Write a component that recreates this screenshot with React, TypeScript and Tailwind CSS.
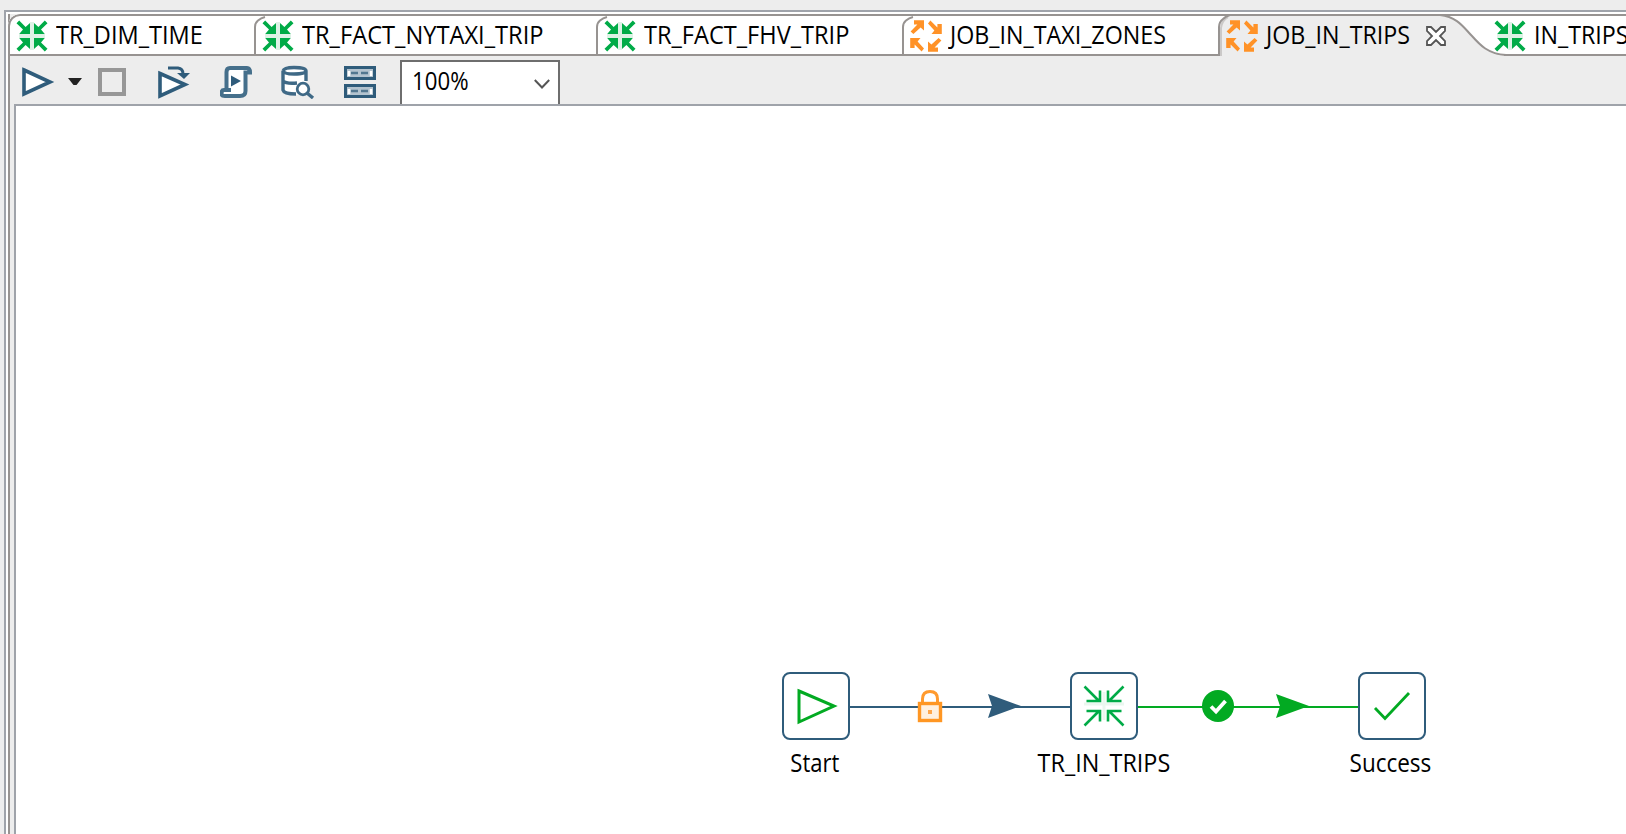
import type { ReactNode } from "react";

const TEXT = "font-['Open_Sans','Noto_Sans',sans-serif] text-[25px] leading-[34px] whitespace-pre text-black";

function TransformationIcon() {
  const arrow = "M0.5 3.2 L3.2 0.5 L9.6 7 L14 3 V14 H3.2 L7 9.6 Z";
  return (
    <svg width="32" height="32" viewBox="0 0 32 32" fill="#00ab47" className="shrink-0">
      <path d="M14 2h4v28h-4zM3 14h26v4H3z" fill="#def2e6" />
      <path d={arrow} />
      <path d={arrow} transform="translate(32 0) scale(-1 1)" />
      <path d={arrow} transform="translate(0 32) scale(1 -1)" />
      <path d={arrow} transform="translate(32 32) scale(-1 -1)" />
    </svg>
  );
}

function JobIcon() {
  const arrow = "M4 0.2 H14 V10.5 L10.6 7.6 L3.4 14 L0.6 11.6 L7.4 4.6 H4 Z";
  return (
    <svg width="32" height="32" viewBox="0 0 32 32" fill="#ff9227" className="shrink-0">
      <path d={arrow} />
      <path d={arrow} transform="rotate(90 16 16)" />
      <path d={arrow} transform="rotate(180 16 16)" />
      <path d={arrow} transform="rotate(270 16 16)" />
    </svg>
  );
}

function TabEdge() {
  return (
    <svg width="12" height="40" viewBox="0 0 12 40" className="absolute left-0 top-0" fill="none" stroke="#979391" strokeWidth="2">
      <path d="M1 39 V11 Q1 7 4 4.500 Q7 2 11 1" />
    </svg>
  );
}

function Tab({ label, icon, box, fit, edge = true }: { label: string; icon: ReactNode; box: string; fit: string; edge?: boolean }) {
  return (
    <div className={`relative flex h-[40px] shrink-0 items-start overflow-hidden border-b-2 border-[#979391] pt-[4px] ${box}`}>
      {edge && <TabEdge />}
      {icon}
      <span className={`ml-2 mt-[-3px] origin-left ${TEXT} ${fit}`}>{label}</span>
    </div>
  );
}

function ActiveTab() {
  return (
    <div className="relative flex h-[40px] w-[268px] shrink-0 items-start pl-2 pt-[4px]">
      <svg width="290" height="42" viewBox="0 0 290 42" className="absolute left-0 top-[-2px] z-10" fill="none">
        <path d="M1 42 V14 Q2 4 12 1 H222 C240 3 246 14 254 22 C262 31 270 41 286 41 V42 Z" fill="#ededed" />
        <path d="M3 42 V14 Q4 6 10 3" stroke="#cbc9c8" strokeWidth="2" />
        <path d="M0 41 H1 V13 Q1 8 5 5 Q8 2 12 1 H222 C240 3 246 14 254 22 C262 31 270 40 288 41" stroke="#979391" strokeWidth="2" />
      </svg>
      <div className="relative z-20 flex items-start">
        <JobIcon />
        <span className={`ml-2 mt-[-3px] w-[152px] origin-left scale-x-[0.93] ${TEXT}`}>JOB_IN_TRIPS</span>
        <svg width="22" height="22" viewBox="0 0 22 22" className="absolute left-[199px] top-[5px]">
          <path d="M2 2 H6 L11 7 L16 2 H20 V6 L15 11 L20 16 V20 H16 L11 15 L6 20 H2 V16 L7 11 L2 6 Z" fill="#fff" stroke="#555" strokeWidth="1.8" />
        </svg>
      </div>
    </div>
  );
}

function Toolbar() {
  return (
    <div className="flex h-[48px] items-start pl-3">
      <svg width="34" height="34" viewBox="0 0 34 34" className="mt-[9px]">
        <path d="M2 5 L28 17 L2 29 Z" fill="#fff" stroke="#2f5c7b" strokeWidth="3.6" />
      </svg>
      <svg width="14" height="8" viewBox="0 0 14 8" className="ml-3 mt-[22px]">
        <path d="M0 0 H14 L8.500 7 H5.500 Z" fill="#222" />
      </svg>
      <div className="ml-4 mt-3 h-7 w-7 border-4 border-[#979797]" />
      <svg width="34" height="34" viewBox="0 0 34 34" className="ml-8 mt-[9px]">
        <path d="M2 8.500 L27 19.500 L2 31 Z" fill="#fff" stroke="#2f5c7b" strokeWidth="3.600" />
        <path d="M10 3 H20 Q25 3.500 25 9" fill="none" stroke="#2f5c7b" strokeWidth="3" />
        <path d="M19 8 H32 L26 14 Z" fill="#2f5c7b" />
      </svg>
      <svg width="32" height="32" viewBox="0 0 32 32" className="ml-7 mt-[10px]">
        <path d="M6 24 V6 Q6 2 10 2 H26 Q30 2 30 7 H26 V24 Q26 30 20 30 H5 Q1.500 30 1.500 27 Q1.500 24 5 24 Z" fill="#fff" />
        <path d="M6.500 22 V6 Q6.500 2 10 2 H27 Q30 2 30 6.500 H25.500 V25 Q25.500 30 20 30 H5 Q1.500 30 1.500 27.500 Q1.500 24 4 24 H11" fill="none" stroke="#456f8b" strokeWidth="4" />
        <path d="M11 9.500 L21 15 L11 20.500 Z" fill="#2f5c7b" />
      </svg>
      <svg width="34" height="34" viewBox="0 0 34 34" className="ml-[29px] mt-[9px]">
        <path d="M2 6 Q2 3 9 2.500 H18 Q25 3 25 6 V28 Q20 30 13 30 Q2 29 2 26 Z" fill="#fff" />
        <path d="M2 6 Q3 2.500 13 2.500 Q25 2.500 25 6 Q25 9 13 9 Q3 9 2 6 V25 Q3 29 15 29 M25 6 V16 M2 16 Q5 19 16 18" fill="none" stroke="#3f6986" strokeWidth="3.400" />
        <circle cx="22" cy="24" r="5.800" fill="#fff" stroke="#3f6986" strokeWidth="2.800" />
        <path d="M26 28 L32 33" stroke="#3f6986" strokeWidth="3.400" />
      </svg>
      <svg width="32" height="32" viewBox="0 0 32 32" className="ml-[29px] mt-[10px]">
        {[0, 18].map((y) => (
          <g key={y} transform={`translate(0 ${y})`}>
            <rect x="1.500" y="1.500" width="29" height="11" fill="#b3c3cf" stroke="#2f5c7b" strokeWidth="3" />
            <path d="M5 5 V10 M27 5 V10" stroke="#fff" strokeWidth="2.500" />
            <path d="M7 7 H14 M17 7 H24" stroke="#527790" strokeWidth="2.400" />
          </g>
        ))}
      </svg>
      <div className="ml-6 mt-1 flex h-[44px] w-[160px] items-start justify-between border-2 border-b-0 border-[#6e6e6e] bg-white pl-[10px] pr-2 pt-px">
        <span className={`w-[60px] origin-left scale-x-[0.89] ${TEXT}`}>100%</span>
        <svg width="16" height="12" viewBox="0 0 16 12" className="mt-[16px]">
          <path d="M0.800 1 L8 8.500 L15.200 1" fill="none" stroke="#555" strokeWidth="2" />
        </svg>
      </div>
    </div>
  );
}

function Node({ place, label, fit, children }: { place: string; label: string; fit: string; children: ReactNode }) {
  return (
    <div className={`absolute top-[566px] flex w-[68px] flex-col items-center ${place}`}>
      <div className="h-[68px] w-[68px] rounded-[8px] border-2 border-[#2f5c7b] bg-white">{children}</div>
      <span className={`mt-[5px] ${TEXT} ${fit}`}>{label}</span>
    </div>
  );
}

function Canvas() {
  const slim = "M0 0 L14 14 M2 14.500 H15.500 V4";
  return (
    <div className="relative min-h-0 flex-1 overflow-hidden bg-white">
      <svg width="508" height="40" viewBox="0 0 508 40" className="absolute left-[834px] top-[580px]">
        <path d="M0 21 H220" stroke="#2f5c7b" strokeWidth="2" />
        <path d="M288 21 H508" stroke="#02aa22" strokeWidth="2" />
        <path d="M138 8 L171 20 L138 32 L142 20 Z" fill="#2f5c7b" />
        <path d="M426 8 L459 20 L426 32 L430 20 Z" fill="#02aa22" />
        <path d="M72.500 17 V13 Q72.500 5.500 80 5.500 Q87.500 5.500 87.500 13 V17" fill="#fff" stroke="#ff9a2e" strokeWidth="3" />
        <rect x="69.500" y="17.500" width="21" height="17" fill="#fff0df" stroke="#ff9623" strokeWidth="3.400" />
        <rect x="78" y="24" width="4" height="4" fill="#ffa64a" />
        <circle cx="368" cy="20" r="16" fill="#02aa22" />
        <path d="M361 20.500 L366 25.500 L375.500 15" fill="none" stroke="#fff" strokeWidth="3.800" />
      </svg>
      <Node place="left-[766px]" label="Start" fit="scale-x-[0.88] translate-x-[-1px]">
        <svg width="64" height="64" viewBox="0 0 64 64">
          <path d="M15 17 L50 32 L15 48 Z" fill="none" stroke="#02aa22" strokeWidth="3" />
        </svg>
      </Node>
      <Node place="left-[1054px]" label="TR_IN_TRIPS" fit="scale-x-[0.935]">
        <svg width="64" height="64" viewBox="0 0 64 64" fill="none" stroke="#00ab47" strokeWidth="2.600">
          <path d="M12 30 H52 M32 18 V46" stroke="#eaf7ef" strokeWidth="3" />
          <path d={slim} transform="translate(12.500 12.500)" />
          <path d={slim} transform="translate(51.500 12.500) scale(-1 1)" />
          <path d={slim} transform="translate(12.500 51.500) scale(1 -1)" />
          <path d={slim} transform="translate(51.500 51.500) scale(-1 -1)" />
        </svg>
      </Node>
      <Node place="left-[1342px]" label="Success" fit="scale-x-[0.9] translate-x-[-2px]">
        <svg width="64" height="64" viewBox="0 0 64 64">
          <path d="M15 34 L25 44.500 L49 19" fill="none" stroke="#02aa22" strokeWidth="2.800" />
        </svg>
      </Node>
    </div>
  );
}

export default function App() {
  return (
    <div className="h-[834px] w-[1626px] overflow-hidden bg-[#ededed] pl-1 pt-[10px]">
      <div className="h-full border-l-2 border-t-2 border-[#9fa3aa] bg-white pl-[2px] pt-[2px]">
        <div className="relative flex h-full flex-col border-l-2 border-[#979391] bg-[#ededed]">
          <div className="ml-[-2px] flex h-[42px] shrink-0 overflow-hidden rounded-tl-[12px] bg-white">
            <div className="relative flex h-[42px] w-full shrink-0 rounded-tl-[12px] border-l-2 border-t-2 border-[#979391]">
              <Tab label="TR_DIM_TIME" icon={<TransformationIcon />} box="w-[244px] pl-[6px]" fit="scale-x-[0.942]" edge={false} />
              <Tab label="TR_FACT_NYTAXI_TRIP" icon={<TransformationIcon />} box="w-[342px] pl-2" fit="scale-x-[0.946]" />
              <Tab label="TR_FACT_FHV_TRIP" icon={<TransformationIcon />} box="w-[306px] pl-2" fit="scale-x-[0.943]" />
              <Tab label="JOB_IN_TAXI_ZONES" icon={<JobIcon />} box="w-[316px] pl-2" fit="scale-x-[0.93]" />
              <ActiveTab />
              <Tab label="IN_TRIPS" icon={<TransformationIcon />} box="w-[142px] pl-2" fit="scale-x-[0.93]" edge={false} />
            </div>
          </div>
          <Toolbar />
          <div className="ml-1 flex min-h-0 flex-1 border-l-2 border-t-2 border-[#9fa3aa]">
            <Canvas />
          </div>
        </div>
      </div>
    </div>
  );
}
